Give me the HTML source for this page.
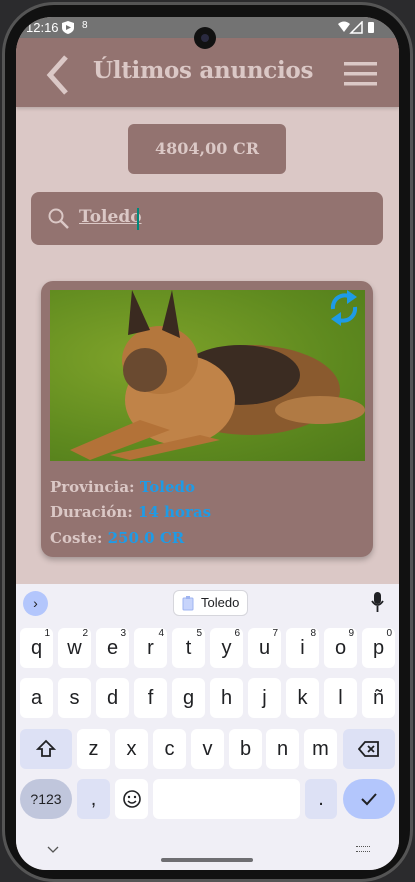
<!DOCTYPE html>
<html><head><meta charset="utf-8"><style>
*{margin:0;padding:0;box-sizing:border-box}
body{width:415px;height:882px;background:#2b2b2d;position:relative;overflow:hidden;font-family:"Liberation Sans",sans-serif}
.frame{position:absolute;left:2px;top:2px;width:411px;height:880px;border-radius:52px;background:#111;border:3px solid #555}
.screen{position:absolute;left:16px;top:17px;width:383px;height:853px;border-radius:36px 36px 30px 30px;overflow:hidden;background:#dbc8c6}
.status{position:absolute;left:0;top:0;width:383px;height:21px;background:#737373;color:#fff;font-size:13px}
.header{position:absolute;left:0;top:21px;width:383px;height:69px;background:#937370;box-shadow:0 2px 3px rgba(0,0,0,.15)}
.serif{font-family:"DejaVu Serif","Liberation Serif",serif}
.title{position:absolute;left:77px;top:19px;font-size:23px;font-weight:bold;color:#dbc8c6;letter-spacing:-0.3px}
.bal{position:absolute;left:112px;top:107px;width:158px;height:50px;background:#937370;border-radius:6px;color:#dbc8c6;font-size:16px;font-weight:bold;text-align:center;line-height:50px}
.search{position:absolute;left:15px;top:175px;width:352px;height:53px;background:#937370;border-radius:8px}
.card{position:absolute;left:25px;top:264px;width:332px;height:276px;background:#937370;border-radius:12px;box-shadow:0 3px 6px rgba(0,0,0,.25)}
.img{position:absolute;left:9px;top:9px;width:315px;height:171px;overflow:hidden;background:radial-gradient(ellipse at 30% 40%,#7fa32a,#5f8a1f 60%,#4f7a1a)}
.line{position:absolute;left:9px;font-size:15px;font-weight:bold;color:#dbc8c6}
.line span{color:#1e9be6}
.kb{position:absolute;left:0;top:567px;width:383px;height:286px;background:#f0eff6}
.k{position:absolute;width:33px;height:40px;background:#fff;border-radius:6px;text-align:center;line-height:40px;font-size:20px;color:#202124}
.k sup{position:absolute;right:3px;top:-14px;font-size:10px}
.m{background:#dde1f5}
</style></head><body>
<div class="frame"></div>
<div class="screen">
 <div class="status"><span style="position:absolute;left:10px;top:3px">12:16</span>
  <svg style="position:absolute;left:46px;top:4px" width="12" height="13"><path d="M6 0L12 2V7C12 10 9 12 6 13C3 12 0 10 0 7V2Z" fill="#fff"/><path d="M4 4L9 6.5L4 9Z" fill="#737373"/></svg>
  <span style="position:absolute;left:66px;top:3px;font-size:10px">8</span>
  <svg style="position:absolute;left:322px;top:4px" width="44" height="13"><path d="M0 3Q6 -2 12 3L6 11Z" fill="#fff"/><path d="M24 1L24 12L13 12Z" fill="none" stroke="#fff" stroke-width="1.5"/><rect x="30" y="1" width="6" height="11" rx="1" fill="#fff"/></svg>
 </div>
 <div style="position:absolute;left:178px;top:10px;width:22px;height:22px;border-radius:50%;background:#111;z-index:5"><div style="margin:7px;width:8px;height:8px;border-radius:50%;background:#2a2a40"></div></div>
 <div class="header">
  <svg style="position:absolute;left:26px;top:16px" width="30" height="42"><path d="M24 3L8 21L24 39" fill="none" stroke="#dbc8c6" stroke-width="5"/></svg>
  <div class="title serif">Últimos anuncios</div>
  <svg style="position:absolute;left:328px;top:24px" width="34" height="24"><rect y="0" width="33" height="3.5" fill="#dbc8c6"/><rect y="10" width="33" height="3.5" fill="#dbc8c6"/><rect y="20" width="33" height="3.5" fill="#dbc8c6"/></svg>
 </div>
 <div class="bal serif">4804,00 CR</div>
 <div class="search">
  <svg style="position:absolute;left:17px;top:16px" width="22" height="22"><circle cx="8" cy="8" r="6.5" fill="none" stroke="#dbc8c6" stroke-width="2"/><path d="M13 13L20 20" stroke="#dbc8c6" stroke-width="2.5"/></svg>
  <div class="serif" style="position:absolute;left:48px;top:15px;font-size:17px;font-weight:bold;color:#dbc8c6;text-decoration:underline">Toledo</div>
  <div style="position:absolute;left:106px;top:16px;width:2px;height:22px;background:#00897b"></div>
 </div>
 <div class="card">
  <div class="img">
   <svg width="315" height="171" viewBox="0 0 315 171">
    <ellipse cx="200" cy="100" rx="90" ry="45" fill="#8a5a2e"/>
    <ellipse cx="190" cy="85" rx="60" ry="30" fill="#3b2c22"/>
    <ellipse cx="270" cy="120" rx="45" ry="14" fill="#b07a44"/>
    <ellipse cx="130" cy="110" rx="55" ry="45" fill="#c08348"/>
    <ellipse cx="110" cy="70" rx="38" ry="34" fill="#b4773d"/>
    <ellipse cx="95" cy="80" rx="22" ry="22" fill="#6a4a30"/>
    <path d="M78 45L82 0L100 40Z" fill="#3a2a20"/><path d="M112 40L122 0L130 48Z" fill="#3a2a20"/>
    <path d="M20 160L90 130L120 140L40 170Z" fill="#b37238"/>
    <path d="M60 165L150 145L170 150L80 170Z" fill="#b37238"/>
   </svg>
  </div>
  <svg style="position:absolute;left:286px;top:6px" width="34" height="42" viewBox="0 0 34 42"><path d="M6 22A12 12 0 0 1 24 10" fill="none" stroke="#1e9be6" stroke-width="4"/><path d="M20 3L30 10L20 17Z" fill="#1e9be6"/><path d="M28 20A12 12 0 0 1 10 32" fill="none" stroke="#1e9be6" stroke-width="4"/><path d="M14 25L4 32L14 39Z" fill="#1e9be6"/></svg>
  <div class="line serif" style="top:197px">Provincia: <span>Toledo</span></div>
  <div class="line serif" style="top:222px">Duración: <span>14 horas</span></div>
  <div class="line serif" style="top:248px">Coste: <span>250.0 CR</span></div>
 </div>
 <div class="kb">
  <div style="position:absolute;left:7px;top:7px;width:25px;height:25px;border-radius:50%;background:#b3c6fc;text-align:center;line-height:24px;font-size:14px;color:#202124">›</div>
  <div style="position:absolute;left:157px;top:6px;width:75px;height:26px;border:1px solid #d6d6dc;border-radius:6px;background:#fff;font-size:13px;line-height:24px;padding-left:27px;color:#202124">Toledo<svg style="position:absolute;left:8px;top:5px" width="12" height="15"><rect x="1" y="2" width="10" height="12" rx="1" fill="#c7d4fb" stroke="#9fb4f0"/><rect x="4" y="0" width="4" height="3" fill="#9fb4f0"/></svg></div>
  <svg style="position:absolute;left:355px;top:8px" width="14" height="22"><rect x="3" y="0" width="7" height="12" rx="3.5" fill="#202124"/><path d="M1 9Q6.5 17 12 9M6.5 14V20" fill="none" stroke="#202124" stroke-width="1.8"/></svg>
  <div class="k" style="left:4px;top:44px">q<sup>1</sup></div><div class="k" style="left:42px;top:44px">w<sup>2</sup></div><div class="k" style="left:80px;top:44px">e<sup>3</sup></div><div class="k" style="left:118px;top:44px">r<sup>4</sup></div><div class="k" style="left:156px;top:44px">t<sup>5</sup></div><div class="k" style="left:194px;top:44px">y<sup>6</sup></div><div class="k" style="left:232px;top:44px">u<sup>7</sup></div><div class="k" style="left:270px;top:44px">i<sup>8</sup></div><div class="k" style="left:308px;top:44px">o<sup>9</sup></div><div class="k" style="left:346px;top:44px">p<sup>0</sup></div>
  <div class="k" style="left:4px;top:94px">a</div><div class="k" style="left:42px;top:94px">s</div><div class="k" style="left:80px;top:94px">d</div><div class="k" style="left:118px;top:94px">f</div><div class="k" style="left:156px;top:94px">g</div><div class="k" style="left:194px;top:94px">h</div><div class="k" style="left:232px;top:94px">j</div><div class="k" style="left:270px;top:94px">k</div><div class="k" style="left:308px;top:94px">l</div><div class="k" style="left:346px;top:94px">ñ</div>
  <div class="k m" style="left:4px;top:145px;width:52px"><svg width="20" height="20" style="margin-top:10px"><path d="M10 2L18 10H14V17H6V10H2Z" fill="none" stroke="#202124" stroke-width="1.8"/></svg></div>
  <div class="k" style="left:61px;top:145px">z</div><div class="k" style="left:99px;top:145px">x</div><div class="k" style="left:137px;top:145px">c</div><div class="k" style="left:175px;top:145px">v</div><div class="k" style="left:213px;top:145px">b</div><div class="k" style="left:250px;top:145px">n</div><div class="k" style="left:288px;top:145px">m</div>
  <div class="k m" style="left:327px;top:145px;width:52px"><svg width="22" height="18" style="margin-top:11px"><path d="M7 2H20V16H7L1 9Z" fill="none" stroke="#202124" stroke-width="1.8"/><path d="M10 6L16 12M16 6L10 12" stroke="#202124" stroke-width="1.8"/></svg></div>
  <div class="k" style="left:4px;top:195px;width:52px;background:#c0c6dc;border-radius:20px;font-size:14px">?123</div>
  <div class="k m" style="left:61px;top:195px">,</div>
  <div class="k" style="left:99px;top:195px"><svg width="20" height="20" style="margin-top:10px"><circle cx="10" cy="10" r="8" fill="none" stroke="#202124" stroke-width="1.6"/><circle cx="7" cy="8" r="1.2" fill="#202124"/><circle cx="13" cy="8" r="1.2" fill="#202124"/><path d="M6 12Q10 16 14 12" fill="none" stroke="#202124" stroke-width="1.5"/></svg></div>
  <div class="k" style="left:137px;top:195px;width:147px"></div>
  <div class="k m" style="left:289px;top:195px;width:32px">.</div>
  <div class="k" style="left:327px;top:195px;width:52px;background:#b3c6fc;border-radius:20px"><svg width="18" height="14" style="margin-top:13px"><path d="M2 7L7 12L16 2" fill="none" stroke="#202124" stroke-width="2"/></svg></div>
  <svg style="position:absolute;left:31px;top:262px" width="12" height="8"><path d="M1 1L6 6L11 1" fill="none" stroke="#555" stroke-width="1.3"/></svg>
  <div style="position:absolute;left:340px;top:262px;width:14px;height:6px;border-top:1px dotted #555;border-bottom:1px dotted #555"></div>
  <div style="position:absolute;left:145px;top:274px;width:92px;height:4px;border-radius:2px;background:#6e6e72"></div>
 </div>
</div>
</body></html>
